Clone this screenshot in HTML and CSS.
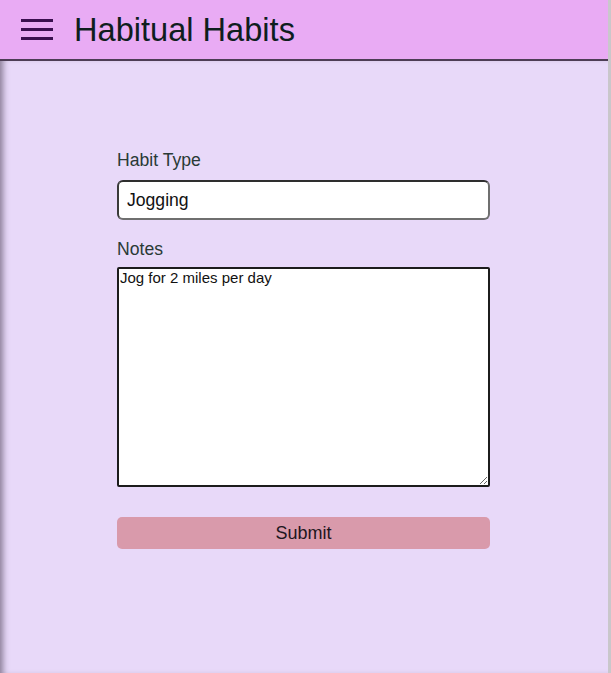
FILE: index.html
```html
<!DOCTYPE html>
<html lang="en">
<head>
<meta charset="utf-8">
<title>Habitual Habits</title>
<link rel="stylesheet" href="styles.css">
</head>
<body>
<div class="app">
  <header class="topbar">
    <button class="menu-btn" aria-label="Menu">
      <svg width="32" height="22" viewBox="0 0 32 22">
        <rect x="0" y="0" width="32" height="3" fill="#3a0f4f"/>
        <rect x="0" y="9" width="32" height="3" fill="#3a0f4f"/>
        <rect x="0" y="18" width="32" height="3" fill="#3a0f4f"/>
      </svg>
    </button>
    <h1 class="title">Habitual Habits</h1>
  </header>
  <main class="content">
    <form class="habit-form">
      <label class="field-label" for="type">Habit Type</label>
      <input class="text-input" id="type" type="text" value="Jogging">
      <label class="field-label notes-label" for="notes">Notes</label>
      <textarea class="notes-input" id="notes">Jog for 2 miles per day</textarea>
      <button class="submit-btn" type="button">Submit</button>
    </form>
  </main>
</div>
</body>
</html>
```

FILE: styles.css
```css
html, body {
  margin: 0;
  padding: 0;
  height: 100%;
}
body {
  background: #c9c7cb;
  font-family: "Liberation Sans", Arial, sans-serif;
}
.app {
  width: calc(100% - 3px);
  height: 100%;
  display: flex;
  flex-direction: column;
}
.topbar {
  height: 59px;
  background: #e9abf4;
  border-bottom: 2px solid #4d3d55;
  display: flex;
  align-items: center;
  padding-left: 21px;
  gap: 21px;
  flex-shrink: 0;
}
.menu-btn {
  background: none;
  border: none;
  padding: 0;
  margin-top: 1px;
  display: flex;
}
.title {
  margin: 0;
  font-size: 32.6px;
  font-weight: normal;
  color: #0f1e1e;
}
.content {
  flex: 1;
  background: #e8d9f9;
  box-shadow: inset 7px 0 6px -4px rgba(60, 50, 70, 0.55);
  display: flex;
  padding-left: 117px;
}
.habit-form {
  width: 373px;
  padding-top: 89px;
  display: flex;
  flex-direction: column;
}
.field-label {
  font-size: 17.6px;
  color: #2a3a36;
  margin-bottom: 9px;
}
.notes-label {
  margin-top: 19px;
  margin-bottom: 7px;
}
.text-input {
  box-sizing: border-box;
  height: 40px;
  width: 100%;
  border: 2px solid #6f6f6f;
  border-top-color: #2e2e2e;
  border-left-color: #3a3a3a;
  border-radius: 6px;
  padding: 0 8px;
  font-family: "Liberation Sans", Arial, sans-serif;
  font-size: 17.6px;
  color: #111;
  background: #fff;
  outline: none;
}
.notes-input {
  box-sizing: border-box;
  width: 100%;
  height: 220px;
  border: 2px solid #1c1c1c;
  border-radius: 2px;
  padding: 0 1px;
  font-family: "Liberation Sans", Arial, sans-serif;
  font-size: 15px;
  color: #111;
  background: #fff;
  outline: none;
  margin: 0;
  display: block;
}
.submit-btn {
  margin-top: 30px;
  height: 32px;
  width: 100%;
  border: none;
  border-radius: 5px;
  background: #d99aab;
  font-family: "Liberation Sans", Arial, sans-serif;
  font-size: 18px;
  color: #1d1620;
  padding: 0;
}
```
